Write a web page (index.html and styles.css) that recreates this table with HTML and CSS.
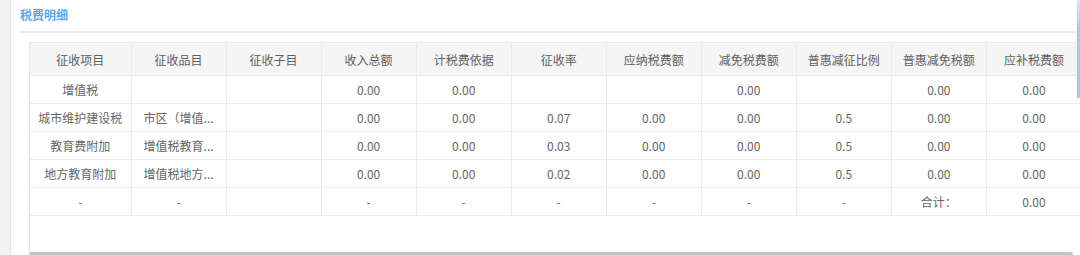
FILE: index.html
```html
<!DOCTYPE html>
<html lang="zh-CN">
<head>
<meta charset="utf-8">
<title>税费明细</title>
<link rel="stylesheet" href="styles.css">
</head>
<body>
<div class="page">
  <div class="strip"></div>
  <div class="panel">
    <div class="title">税费明细</div>
    <div class="divider"></div>
    <div class="table-wrap">
      <table class="grid">
        <colgroup>
          <col class="c-first">
          <col class="c"><col class="c"><col class="c"><col class="c"><col class="c">
          <col class="c"><col class="c"><col class="c"><col class="c"><col class="c">
        </colgroup>
        <thead>
          <tr>
            <th>征收项目</th><th>征收品目</th><th>征收子目</th><th>收入总额</th><th>计税费依据</th>
            <th>征收率</th><th>应纳税费额</th><th>减免税费额</th><th>普惠减征比例</th><th>普惠减免税额</th><th>应补税费额</th>
          </tr>
        </thead>
        <tbody>
          <tr>
            <td>增值税</td><td></td><td></td><td>0.00</td><td>0.00</td>
            <td></td><td></td><td>0.00</td><td></td><td>0.00</td><td>0.00</td>
          </tr>
          <tr>
            <td>城市维护建设税</td><td class="ell">市区（增值...</td><td></td><td>0.00</td><td>0.00</td>
            <td>0.07</td><td>0.00</td><td>0.00</td><td>0.5</td><td>0.00</td><td>0.00</td>
          </tr>
          <tr>
            <td>教育费附加</td><td class="ell">增值税教育...</td><td></td><td>0.00</td><td>0.00</td>
            <td>0.03</td><td>0.00</td><td>0.00</td><td>0.5</td><td>0.00</td><td>0.00</td>
          </tr>
          <tr>
            <td>地方教育附加</td><td class="ell">增值税地方...</td><td></td><td>0.00</td><td>0.00</td>
            <td>0.02</td><td>0.00</td><td>0.00</td><td>0.5</td><td>0.00</td><td>0.00</td>
          </tr>
          <tr>
            <td>-</td><td>-</td><td></td><td>-</td><td>-</td>
            <td>-</td><td>-</td><td>-</td><td>-</td><td>合计：</td><td>0.00</td>
          </tr>
        </tbody>
      </table>
      <div class="hscroll"></div>
    </div>
  </div>
  <div class="vscroll"></div>
</div>
</body>
</html>
```

FILE: styles.css
```css
html, body {
  margin: 0;
  padding: 0;
  width: 1080px;
  height: 255px;
  overflow: hidden;
  background: #ffffff;
  font-family: "Noto Sans CJK SC", "Microsoft YaHei", sans-serif;
}

.page {
  position: relative;
  display: flex;
  height: 255px;
}

.strip {
  width: 10px;
  flex: none;
  background: #eff1f4;
  border-right: 1px solid #e2e4e7;
}

.panel {
  flex: 1;
  min-width: 0;
  display: flex;
  flex-direction: column;
  padding-left: 9px;
  background: #ffffff;
}

.title {
  height: 31px;
  line-height: 29px;
  font-size: 12px;
  font-weight: bold;
  color: #5ba8f0;
}

.divider {
  height: 2px;
  background: #ececec;
}

.table-wrap {
  flex: 1;
  display: flex;
  flex-direction: column;
  margin: 9px 0 0 9px;
  border-left: 1px solid #e6e6e6;
  min-height: 0;
}

.grid {
  border-collapse: collapse;
  table-layout: fixed;
  width: 1052px;
  font-size: 12px;
  color: #666666;
}

.c-first { width: 101px; }
.c { width: 95px; }

.grid th,
.grid td {
  border: 1px solid #ebebeb;
  text-align: center;
  white-space: nowrap;
  padding: 0 4px;
}

.grid tr > :first-child { border-left: none; }

.grid th {
  height: 32px;
  background: #f5f5f5;
  font-weight: normal;
  color: #5e5e5e;
}

.grid td {
  height: 27px;
}

.grid td.ell {
  padding: 0 2px;
}

.hscroll {
  margin-top: auto;
  height: 3px;
  width: 1043px;
  background: #c3c3c3;
  border-radius: 0 2px 0 0;
}

.vscroll {
  position: absolute;
  right: 0;
  top: 0;
  width: 3px;
  height: 98px;
  background: linear-gradient(#d6e6f7, #a9c9ec 30%, #a9c9ec);
}
```
